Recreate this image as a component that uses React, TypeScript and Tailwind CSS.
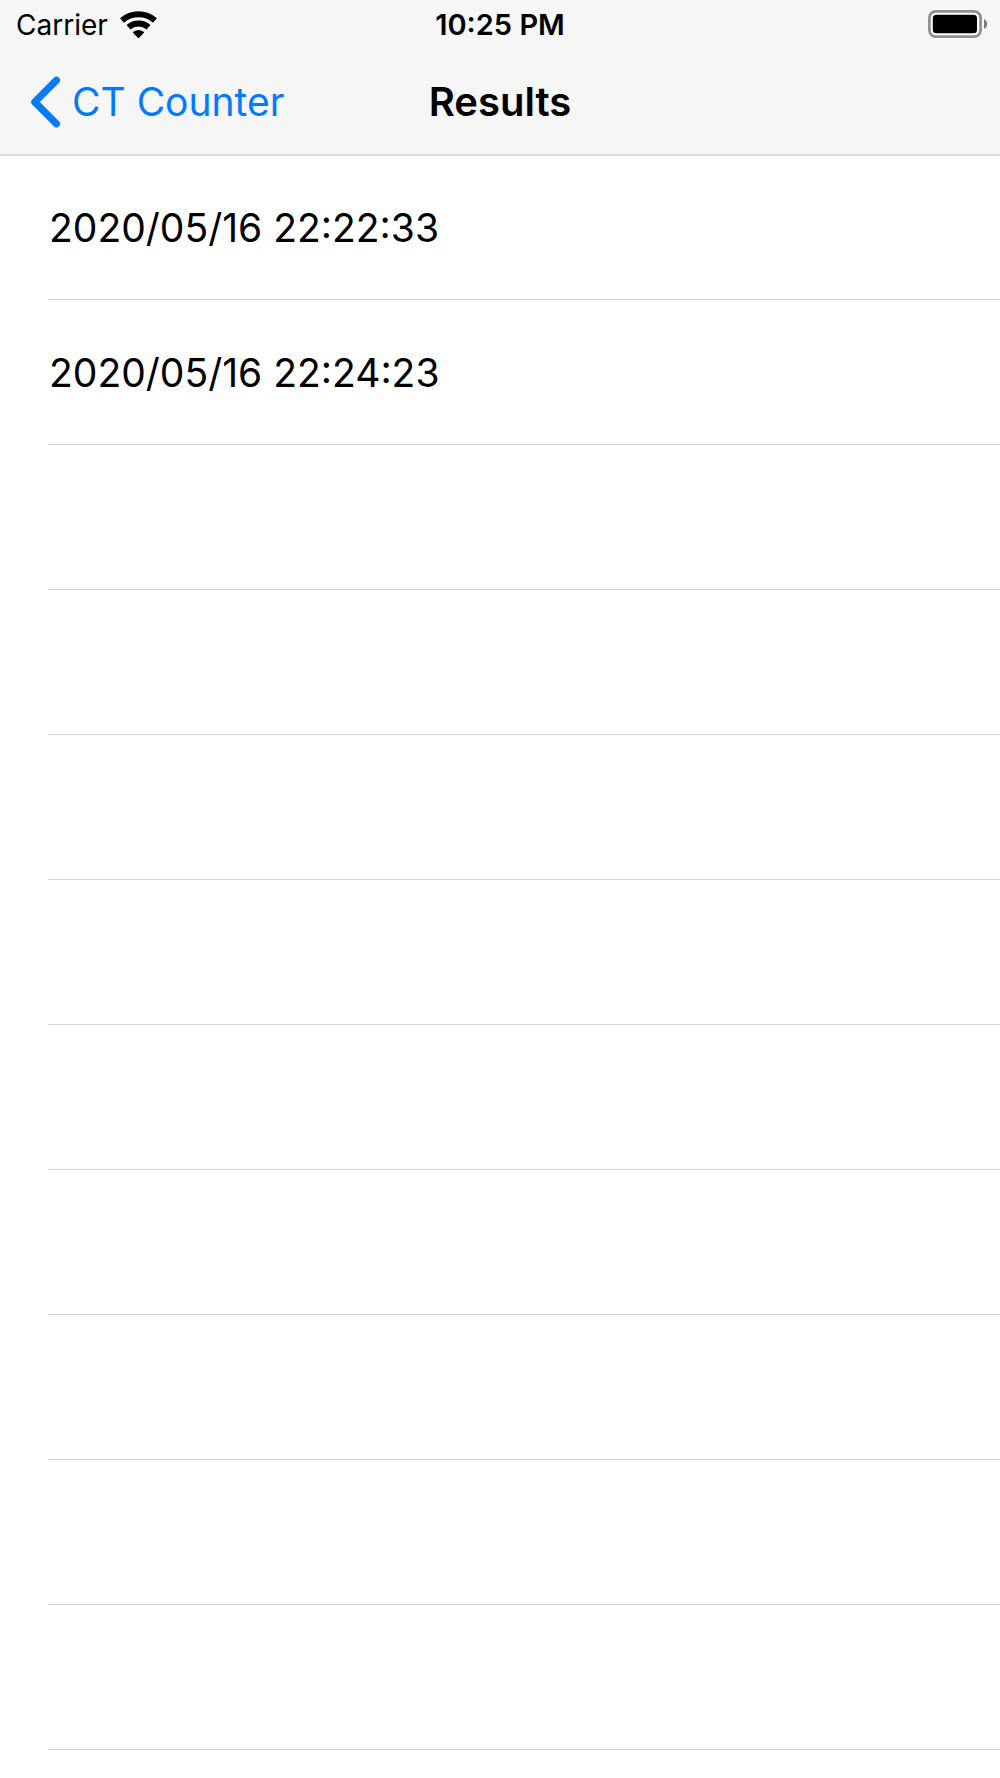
const results = [
    "2020/05/16 22:22:33",
    "2020/05/16 22:24:23",
];

// empty rows keep the separators going down the screen
const EMPTY_ROWS = 9;

const WifiIcon = () => (
    <svg width="37" height="27" viewBox="0 0 37 27" fill="none" stroke="black" strokeWidth="6" aria-hidden="true">
        <path d="M2 9.4A25 25 0 0 1 35 9.4" />
        <path d="M8.5 16.2A15.6 15.6 0 0 1 28.5 16.2" />
        <path d="M13.9 21.4Q18.5 18.4 23.1 21.4L18.5 26Z" fill="black" stroke="black" strokeWidth="1.8" strokeLinejoin="round" />
    </svg>
);

const BatteryIcon = () => (
    <svg width="60" height="28" viewBox="0 0 60 28" fill="none" aria-hidden="true">
        <rect x="1.4" y="1.4" width="51.2" height="25.2" rx="6.5" fill="white" stroke="#8e8e8e" strokeWidth="2.7" />
        <rect x="4.8" y="4.8" width="44.2" height="18.4" rx="3.5" fill="black" />
        <path d="M56 9C60.2 11 60.2 17 56 19Z" fill="#7c7c7c" />
    </svg>
);

const BackIcon = () => (
    <svg width="30" height="52" viewBox="0 0 30 52" fill="none" stroke="currentColor" strokeWidth="7.2" strokeLinecap="round" strokeLinejoin="round" aria-hidden="true">
        <path d="M26.4 4.2L4.8 26L26.4 47.8" />
    </svg>
);

const StatusBar = () => (
    <div className="grid grid-cols-3 items-center h-12 px-3 text-[28px]">
        <div className="flex items-center gap-3 pl-1">
            <span className="pt-[2px]">Carrier</span>
            <WifiIcon />
        </div>
        <span className="pt-[2px] text-center text-[29px] font-semibold">10:25 PM</span>
        <div className="flex justify-end">
            <BatteryIcon />
        </div>
    </div>
);

const App = () => {
    return (
        <div className="min-h-screen bg-white text-black font-['Inter',sans-serif]">
            <header className="relative bg-[#f6f6f6] border-b border-[#d9d9d9] shadow-[0_1px_0_#d9d9d9]">
                <StatusBar />

                <nav className="grid grid-cols-3 items-center h-[106px] px-[30px] pt-[2px] text-[39px]">
                    <a href="#" className="flex items-center gap-3 text-[#007aff] whitespace-nowrap">
                        <BackIcon />
                        CT Counter
                    </a>
                    <h1 className="text-center text-[40px] font-semibold">Results</h1>
                </nav>
            </header>

            <ul className="pl-12">
                {results.map((result) => (
                    <li key={result} className="flex items-center h-[145px] pl-px pt-[2px] border-b border-[#d4d4d4] text-[39px]">
                        {result}
                    </li>
                ))}

                {Array.from({ length: EMPTY_ROWS }, (_, i) => (
                    <li key={i} aria-hidden="true" className="h-[145px] border-b border-[#d4d4d4]" />
                ))}
            </ul>
        </div>
    );
};

export default App;
